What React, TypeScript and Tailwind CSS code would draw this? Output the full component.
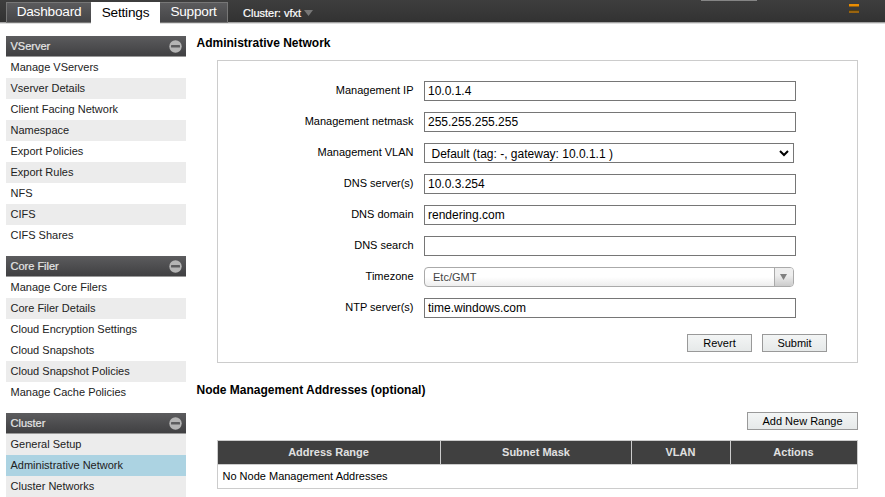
import React from "react";

type Section = { title: string; items: string[]; shaded: string[] };

const sections: Section[] = [
  {
    title: "VServer",
    items: ["Manage VServers", "Vserver Details", "Client Facing Network", "Namespace", "Export Policies", "Export Rules", "NFS", "CIFS", "CIFS Shares"],
    shaded: ["Vserver Details", "Namespace", "Export Rules", "CIFS"],
  },
  {
    title: "Core Filer",
    items: ["Manage Core Filers", "Core Filer Details", "Cloud Encryption Settings", "Cloud Snapshots", "Cloud Snapshot Policies", "Manage Cache Policies"],
    shaded: ["Core Filer Details", "Cloud Snapshot Policies"],
  },
  {
    title: "Cluster",
    items: ["General Setup", "Administrative Network", "Cluster Networks"],
    shaded: ["General Setup", "Cluster Networks"],
  },
];

function SidebarSection({ title, items, shaded }: Section) {
  return (
    <section className="mb-[10px]">
      <h3 className="flex h-[21px] items-center justify-between border-b border-[#999] bg-linear-to-b from-[#5c5c5e] to-[#404042] pr-1 pl-[4.5px] text-[11px] text-[#e6e6e6]">
        <span className="[-webkit-text-stroke:0.2px_#e6e6e6]">{title}</span>
        <svg width="13" height="13" viewBox="0 0 13 13">
          <circle cx="6.5" cy="6.5" r="6.2" fill="#b4b4b4" />
          <rect x="2" y="5" width="9" height="2.5" rx="0.5" fill="#5c5c5e" />
        </svg>
      </h3>
      <ul>
        {items.map((item) => {
          const bg = item === "Administrative Network" ? "bg-[#acd3e2]" : shaded.includes(item) ? "bg-[#ececec]" : "bg-white";
          return (
            <li key={item} className={`h-[21px] pl-[4.5px] text-[11px] leading-[21px] text-[#222] ${bg}`}>
              {item}
            </li>
          );
        })}
      </ul>
    </section>
  );
}

function Field({ label, children }: { label: string; children: React.ReactNode }) {
  return (
    <div className="flex h-5 items-center">
      <label className="w-[195.5px] pb-[1px] text-right text-[11px] leading-[19px]">{label}</label>
      <div className="ml-[10.5px] flex">{children}</div>
    </div>
  );
}

function TextBox({ value }: { value: string }) {
  return <input readOnly value={value} className="h-5 w-[372px] border border-[#767676] bg-white px-[3px] text-[12px] text-black outline-none" />;
}

function PushButton({ className, children }: { className: string; children: React.ReactNode }) {
  return (
    <button className={`h-[18px] border border-[#999] bg-linear-to-b from-[#f3f5f5] to-[#e6e9e9] text-[11px] leading-4 ${className}`}>{children}</button>
  );
}

export default function App() {
  return (
    <div className="h-[497px] w-[885px] overflow-hidden bg-white font-['Liberation_Sans',Arial,sans-serif] text-black">
      <header className="relative flex h-6 items-start bg-[linear-gradient(#3e3e3e_0px,#323232_22px,#999_22px,#aaa_23px,#ddd_23px)] pt-[2px] pl-[6px] text-[13.6px] tracking-[-0.2px]">
        <div className="flex h-[21px] w-[85px] items-center justify-center border border-r-0 border-[#777] bg-linear-to-b from-[#5b5b5d] to-[#454547] text-white">Dashboard</div>
        <div className="flex h-[22px] w-[69px] items-center justify-center bg-white text-black">Settings</div>
        <div className="flex h-[21px] w-[68px] items-center justify-center border border-l-0 border-[#777] bg-linear-to-b from-[#5b5b5d] to-[#454547] text-white">Support</div>
        <div className="ml-[15px] flex h-[22px] items-center gap-[3px] text-[11px] tracking-normal text-white">
          <span className="[-webkit-text-stroke:0.2px_#fff]">Cluster: vfxt</span>
          <svg width="9" height="6" viewBox="0 0 9 6"><path d="M0 0H9L4.5 6Z" fill="#777" /></svg>
        </div>
        <div className="absolute top-0 left-[701px] h-px w-14 bg-[#858585]" />
        <svg className="absolute top-1 left-[849px]" width="10" height="9" viewBox="0 0 10 9">
          <path d="M0 0H10V2H0Z" fill="#e98d03" />
          <path d="M0 2H10V3H0Z" fill="#94600f" />
          <path d="M0 6H10V7H0Z" fill="#57400f" />
          <path d="M0 7H10V9H0Z" fill="#9a6410" />
        </svg>
      </header>

      <div className="flex pt-3 pl-[6px]">
        <nav className="w-[180px] shrink-0">
          {sections.map((s) => (
            <SidebarSection key={s.title} {...s} />
          ))}
        </nav>

        <main className="ml-[11px] w-[661px]">
          <h2 className="h-6 -indent-[0.5px] text-[12px] leading-[14px] font-bold">Administrative Network</h2>
          <form className="ml-5 h-[303px] w-[641px] border border-[#ccc] pt-5">
            <div className="flex flex-col gap-[11px]">
              <Field label="Management IP"><TextBox value="10.0.1.4" /></Field>
              <Field label="Management netmask"><TextBox value="255.255.255.255" /></Field>
              <Field label="Management VLAN">
                <div className="flex h-5 w-[370px] items-center justify-between border border-[#767676] pr-[4px] pl-[6.5px] text-[12px]">
                  <span className="pt-px">Default (tag: -, gateway: 10.0.1.1 )</span>
                  <svg width="10" height="7" viewBox="0 0 10 7"><path d="M1 1L5 5L9 1" fill="none" stroke="#000" strokeWidth="2" /></svg>
                </div>
              </Field>
              <Field label="DNS server(s)"><TextBox value="10.0.3.254" /></Field>
              <Field label="DNS domain"><TextBox value="rendering.com" /></Field>
              <Field label="DNS search"><TextBox value="" /></Field>
              <Field label="Timezone">
                <div className="flex h-5 w-[370px] overflow-hidden rounded-[4px] border border-[#aaa] bg-linear-to-t from-[#eee] to-white to-50% text-[11px] text-[#444]">
                  <span className="flex-1 pl-2 leading-[19px]">Etc/GMT</span>
                  <span className="flex w-[19px] items-center justify-center border-l border-[#aaa] bg-linear-to-t from-[#ccc] to-[#eee] to-60%">
                    <svg width="7" height="6" viewBox="0 0 7 6" className="mr-px mb-px"><path d="M0 0H7L3.5 6Z" fill="#808080" /></svg>
                  </span>
                </div>
              </Field>
              <Field label="NTP server(s)"><TextBox value="time.windows.com" /></Field>
            </div>
            <div className="mt-4 flex justify-end gap-[10px] pr-[30px]">
              <PushButton className="w-[65px]">Revert</PushButton>
              <PushButton className="w-[65px]">Submit</PushButton>
            </div>
          </form>

          <h2 className="mt-5 h-[29px] -indent-[0.5px] text-[12px] leading-[14px] font-bold">Node Management Addresses (optional)</h2>
          <div className="flex justify-end">
            <PushButton className="w-[111px]">Add New Range</PushButton>
          </div>
          <table className="mt-[10px] ml-5 w-[641px] table-fixed border-separate border-spacing-0 border-t border-l border-[#ccc] text-[11px]">
            <thead>
              <tr className="h-6 bg-[#404040] text-[#e0e0e0]">
                <th className="w-[223px] border-r border-b border-[#ccc] p-0 pr-px">Address Range</th>
                <th className="w-[191px] border-r border-b border-[#ccc] p-0">Subnet Mask</th>
                <th className="w-[99px] border-r border-b border-[#ccc] p-0 pr-px">VLAN</th>
                <th className="border-r border-b border-[#ccc] p-0 pr-px">Actions</th>
              </tr>
            </thead>
            <tbody>
              <tr className="h-6">
                <td colSpan={4} className="border-r border-b border-[#ccc] p-0 pl-[4.5px]">No Node Management Addresses</td>
              </tr>
            </tbody>
          </table>
        </main>
      </div>
    </div>
  );
}
